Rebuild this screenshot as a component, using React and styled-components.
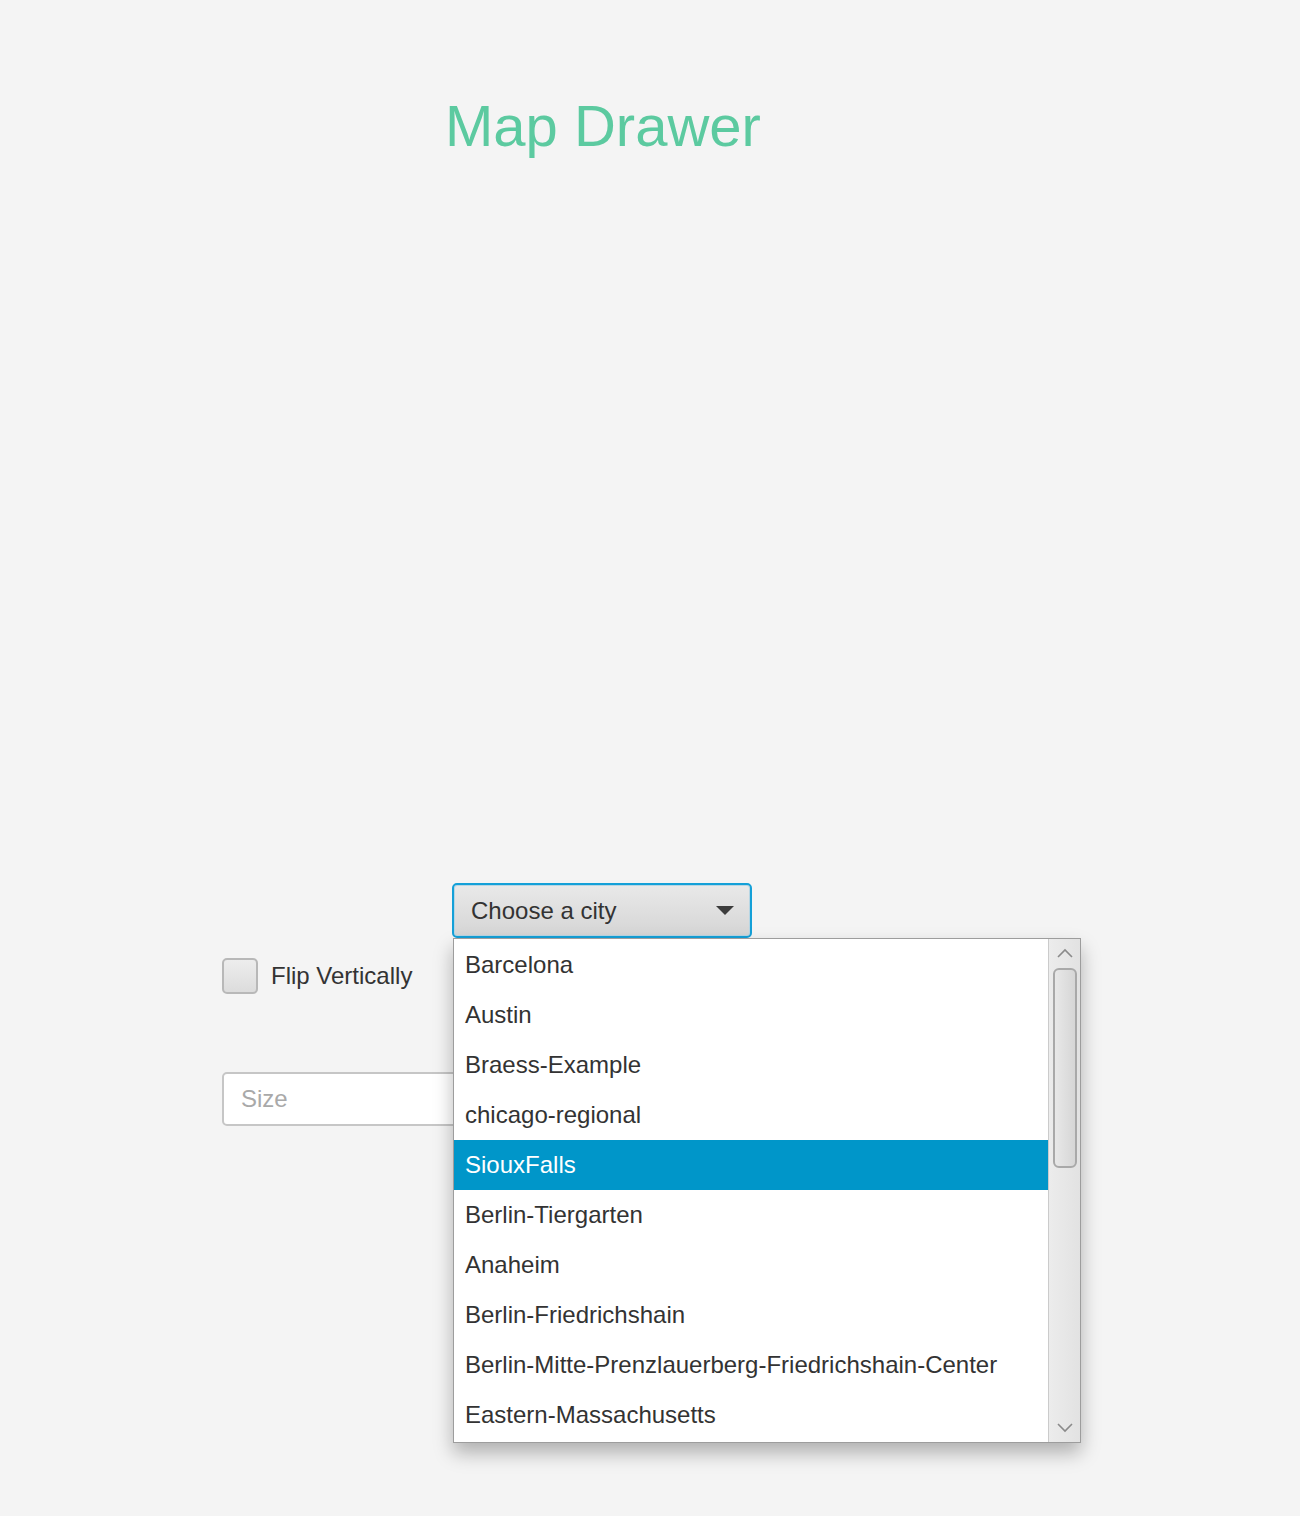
import React from 'react';
import styled, { createGlobalStyle } from 'styled-components';

const GlobalStyle = createGlobalStyle`
  body {
    margin: 0;
    background: #f4f4f4;
    font-family: "Liberation Sans", Arial, sans-serif;
  }
  * { box-sizing: border-box; }
`

const Page = styled.div`
  min-height: 1516px;
  background: #f4f4f4;
  color: #333;
`

const Title = styled.h1`
  margin: 0;
  padding: 97px 0 0 445px;
  font-size: 58px;
  line-height: 58px;
  font-weight: 400;
  color: #5ccaa0;
`

const MapCanvas = styled.div`
  height: 728px;
`

const Controls = styled.div`
  display: flex;
  align-items: flex-start;
  padding-left: 222px;
`

const LeftColumn = styled.div`
  width: 230px;
  padding-top: 75px;
  display: flex;
  flex-direction: column;
  gap: 78px;
`

const CheckRow = styled.label`
  display: flex;
  align-items: center;
  gap: 13px;
  height: 36px;
  font-size: 24px;
  color: #333;
`

const CheckBox = styled.span`
  width: 36px;
  height: 36px;
  border: 2px solid #b8b8b8;
  border-radius: 5px;
  background: linear-gradient(#ededed, #dcdcdc);
`

const TextField = styled.div`
  width: 320px;
  height: 54px;
  padding-left: 17px;
  display: flex;
  align-items: center;
  background: #fff;
  border: 2px solid #c6c6c6;
  border-radius: 5px;
  font-size: 24px;
  color: #a9a9a9;
`

const RightColumn = styled.div`
  position: relative;
  z-index: 5;
`

const Combo = styled.div`
  width: 300px;
  height: 55px;
  padding: 0 16px 0 17px;
  display: flex;
  align-items: center;
  justify-content: space-between;
  border: 2px solid #14a0d8;
  border-radius: 5px;
  box-shadow: inset 0 0 0 1px #b7d6e4;
  background: linear-gradient(#e9e9e9, #d5d5d5);
  font-size: 24px;
  color: #333;
`

const Arrow = styled.span`
  width: 0;
  height: 0;
  border-left: 9px solid transparent;
  border-right: 9px solid transparent;
  border-top: 9px solid #3c3c3c;
`

const Popup = styled.div`
  position: absolute;
  top: 100%;
  left: 1px;
  z-index: 10;
  width: 628px;
  height: 505px;
  display: flex;
  background: #fff;
  border: 1px solid #9d9d9d;
  box-shadow: 0 10px 18px rgba(0, 0, 0, 0.28);
`

const List = styled.ul`
  flex: 1;
  margin: 0;
  padding: 1px 0 0;
  list-style: none;
`

const Item = styled.li`
  height: 50px;
  line-height: 50px;
  padding-left: 11px;
  font-size: 24px;
  white-space: nowrap;
  color: ${p => (p.selected ? '#fff' : '#333')};
  background: ${p => (p.selected ? '#0096c9' : 'transparent')};
`

const ScrollBar = styled.div`
  width: 32px;
  display: flex;
  flex-direction: column;
  align-items: center;
  border-left: 1px solid #cbcbcb;
  background: linear-gradient(90deg, #ececec, #e2e2e2);
`

const ScrollButton = styled.div`
  height: 28px;
  display: flex;
  align-items: center;
  justify-content: center;
`

const Thumb = styled.div`
  width: 24px;
  height: 200px;
  margin-top: 1px;
  border: 2px solid #a9a9a9;
  border-radius: 6px;
  background: linear-gradient(90deg, #e8e8e8, #d6d6d6);
`

const Track = styled.div`
  flex: 1;
`

const Chevron = ({ up }) => (
  <svg width="16" height="10" viewBox="0 0 16 10">
    <polyline
      points={up ? '1,9 8,2 15,9' : '1,1 8,8 15,1'}
      fill="none"
      stroke="#8a8a8a"
      strokeWidth="1.6"
    />
  </svg>
)

const cities = [
  'Barcelona',
  'Austin',
  'Braess-Example',
  'chicago-regional',
  'SiouxFalls',
  'Berlin-Tiergarten',
  'Anaheim',
  'Berlin-Friedrichshain',
  'Berlin-Mitte-Prenzlauerberg-Friedrichshain-Center',
  'Eastern-Massachusetts',
]

const App = () => {
  return (
    <Page>
      <GlobalStyle />
      <Title>Map Drawer</Title>
      <MapCanvas />
      <Controls>
        <LeftColumn>
          <CheckRow>
            <CheckBox />
            Flip Vertically
          </CheckRow>
          <TextField>Size</TextField>
        </LeftColumn>
        <RightColumn>
          <Combo>
            Choose a city
            <Arrow />
          </Combo>
          <Popup>
            <List>
              {cities.map(c => (
                <Item key={c} selected={c === 'SiouxFalls'}>{c}</Item>
              ))}
            </List>
            <ScrollBar>
              <ScrollButton><Chevron up /></ScrollButton>
              <Thumb />
              <Track />
              <ScrollButton><Chevron /></ScrollButton>
            </ScrollBar>
          </Popup>
        </RightColumn>
      </Controls>
    </Page>
  )
}

export default App;
